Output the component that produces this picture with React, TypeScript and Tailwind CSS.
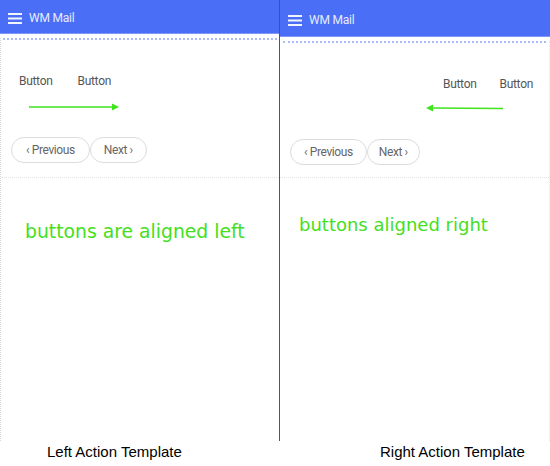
import React from "react";

function Hamburger() {
  return (
    <svg width="14" height="11" viewBox="0 0 14 11" className="shrink-0">
      <rect x="0" y="0" width="14" height="2" fill="#f1f4ff" />
      <rect x="0" y="4.5" width="14" height="2" fill="#f1f4ff" />
      <rect x="0" y="9" width="14" height="2" fill="#f1f4ff" />
    </svg>
  );
}

function Header({ tall }: { tall?: boolean }) {
  return (
    <div
      className={`flex items-center gap-[7px] px-[8px] bg-[#4a6ef5] border-b border-[#7f98f8] ${
        tall ? "h-[37px] pt-[4px]" : "h-[34px] pt-[3px]"
      }`}
    >
      <Hamburger />
      <span className="text-[12px] text-[#e6ecff] font-['Roboto',sans-serif] tracking-[-0.2px]">
        WM Mail
      </span>
    </div>
  );
}

function Pager({ wide }: { wide?: boolean }) {
  return (
    <div className="flex font-['Roboto',sans-serif] text-[12px] text-[#666] tracking-[-0.4px]">
      <button
        className={`h-[26px] rounded-full border border-[#dcdcdc] bg-white ${
          wide ? "px-[14px]" : "px-[13px]"
        }`}
      >
        ‹ Previous
      </button>
      <button
        className={`h-[26px] rounded-full border border-[#dcdcdc] bg-white ${
          wide ? "px-[13px]" : "px-[11px]"
        }`}
      >
        Next ›
      </button>
    </div>
  );
}

function Arrow({ dir }: { dir: "left" | "right" }) {
  return dir === "right" ? (
    <svg width="90" height="8" viewBox="0 0 90 8">
      <line x1="0" y1="4" x2="84" y2="4" stroke="#3ee51c" strokeWidth="1.5" />
      <polygon points="83,0.5 90,4 83,7.5" fill="#3ee51c" />
    </svg>
  ) : (
    <svg width="77" height="8" viewBox="0 0 77 8">
      <line x1="6" y1="4" x2="77" y2="4.6" stroke="#3ee51c" strokeWidth="1.5" />
      <polygon points="7,0.5 0,4 7,7.5" fill="#3ee51c" />
    </svg>
  );
}

export default function App() {
  return (
    <div className="w-[550px] h-[466px] bg-white flex flex-col">
      <div className="flex h-[441px]">
        {/* Left panel */}
        <div className="w-[280px] flex flex-col border-r border-[#555]">
          <Header />
          <div className="flex-1 flex flex-col border-l border-dotted border-[#d8d8d8] mt-[4px]">
            <div className="mx-[2px] border-t-2 border-dotted border-[#a9bcf7]" />
            <div className="flex flex-col pl-[10px] border-b border-dotted border-[#e2e2e2] h-[138px]">
              <div className="flex gap-[25px] pl-[8px] mt-[32px] font-['Roboto',sans-serif] text-[12px] text-[#555] tracking-[-0.3px]">
                <span>Button</span>
                <span>Button</span>
              </div>
              <div className="pl-[18px] mt-[13px] h-[8px] flex">
                <Arrow dir="right" />
              </div>
              <div className="mt-[26px]">
                <Pager wide />
              </div>
            </div>
            <div className="pl-[24px] pt-[40px] text-[18.8px] text-[#44e01c] font-['DejaVu_Sans',sans-serif]">
              buttons are aligned left
            </div>
          </div>
        </div>

        {/* Right panel */}
        <div className="flex-1 flex flex-col">
          <Header tall />
          <div className="flex-1 flex flex-col mt-[4px] border-r border-dotted border-[#e4e4e4]">
            <div className="mx-[3px] border-t-2 border-dotted border-[#a9bcf7]" />
            <div className="flex flex-col border-b border-dotted border-[#e2e2e2] h-[135px]">
              <div className="flex justify-end gap-[23px] pr-[16px] mt-[32px] font-['Roboto',sans-serif] text-[12px] text-[#555] tracking-[-0.3px]">
                <span>Button</span>
                <span>Button</span>
              </div>
              <div className="flex justify-end pr-[46px] mt-[11px] h-[8px]">
                <Arrow dir="left" />
              </div>
              <div className="pl-[10px] mt-[27px]">
                <Pager />
              </div>
            </div>
            <div className="pl-[19px] pt-[33px] text-[18px] text-[#44e01c] font-['DejaVu_Sans',sans-serif]">
              buttons aligned right
            </div>
          </div>
        </div>
      </div>

      {/* Captions */}
      <div className="flex font-['Liberation_Sans',Arial,sans-serif] text-[15px] text-black">
        <div className="w-[280px] pl-[47px]">Left Action Template</div>
        <div className="flex-1 pl-[100px]">Right Action Template</div>
      </div>
    </div>
  );
}
